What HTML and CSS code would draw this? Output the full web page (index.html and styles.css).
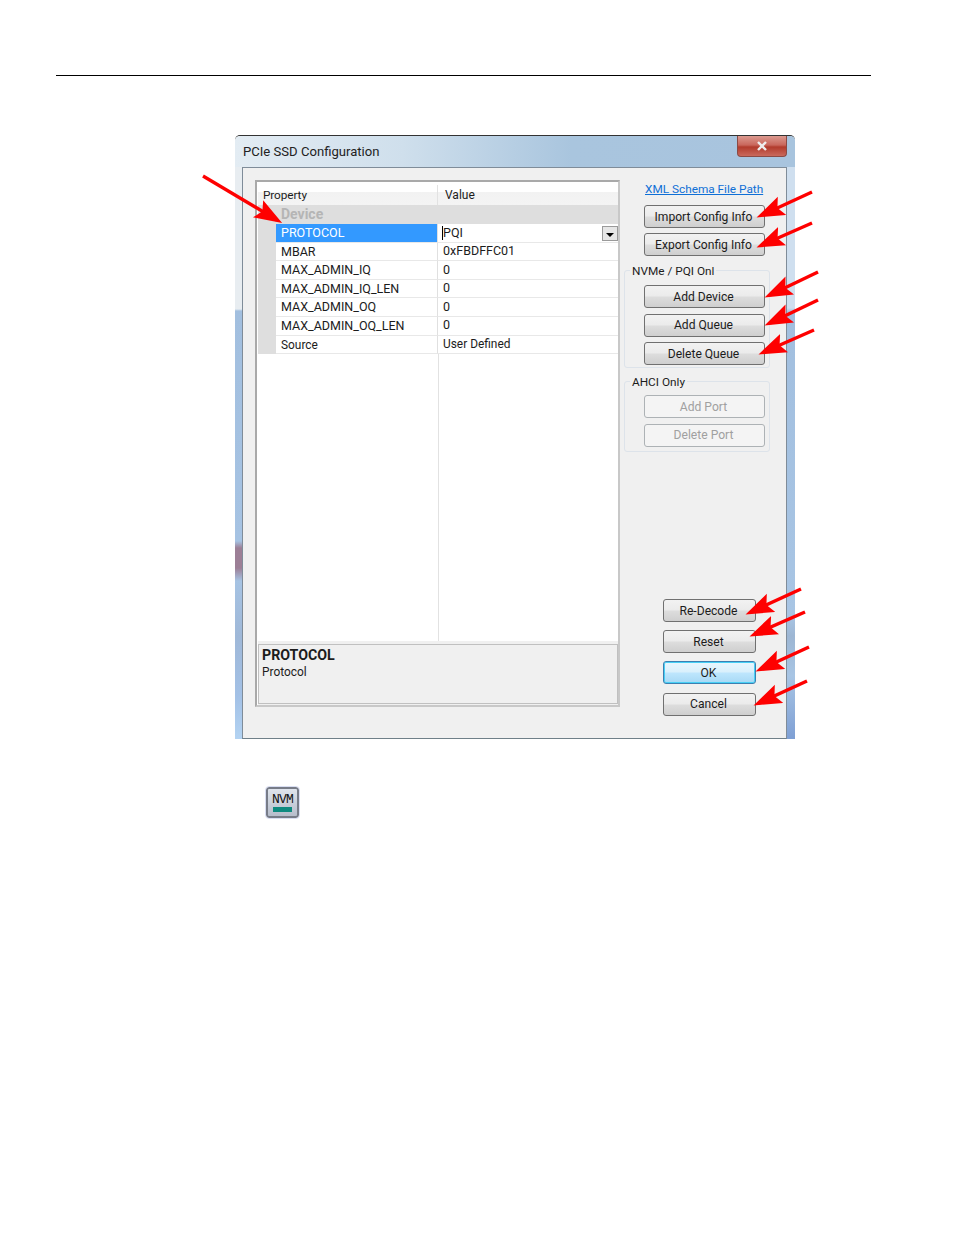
FILE: index.html
```html
<!DOCTYPE html>
<html lang="en">
<head>
    <meta charset="UTF-8">
    <meta name="viewport" content="width=device-width, initial-scale=1.0">
    <title>PCIe SSD Configuration</title>
    <link rel="stylesheet" href="styles.css">
</head>
<body>
    <div class="page">
        <hr class="top-rule">

        <div class="dialog">
            <div class="titlebar">
                <span class="title">PCIe SSD Configuration</span>
                <div class="close-btn">
                    <svg width="12" height="10" viewBox="0 0 12 10">
                        <path d="M2 1 L10 9 M10 1 L2 9" stroke="#eee" stroke-width="2.4" fill="none"/>
                    </svg>
                </div>
            </div>

            <div class="client">
                <div class="prop-panel">
                    <div class="prop-header">
                        <div class="col-name">Property</div>
                        <div class="col-value">Value</div>
                    </div>
                    <div class="prop-group">Device</div>
                    <div class="prop-row selected">
                        <div class="col-name">PROTOCOL</div>
                        <div class="col-value"><span class="caret">PQI</span>
                            <span class="combo-btn"></span>
                        </div>
                    </div>
                    <div class="prop-row">
                        <div class="col-name">MBAR</div>
                        <div class="col-value">0xFBDFFC01</div>
                    </div>
                    <div class="prop-row">
                        <div class="col-name">MAX_ADMIN_IQ</div>
                        <div class="col-value">0</div>
                    </div>
                    <div class="prop-row">
                        <div class="col-name">MAX_ADMIN_IQ_LEN</div>
                        <div class="col-value">0</div>
                    </div>
                    <div class="prop-row">
                        <div class="col-name">MAX_ADMIN_OQ</div>
                        <div class="col-value">0</div>
                    </div>
                    <div class="prop-row">
                        <div class="col-name">MAX_ADMIN_OQ_LEN</div>
                        <div class="col-value">0</div>
                    </div>
                    <div class="prop-row">
                        <div class="col-name mixed">Source</div>
                        <div class="col-value mixed">User Defined</div>
                    </div>
                    <div class="prop-empty"></div>
                    <div class="desc-wrap">
                        <div class="desc">
                            <div class="desc-title">PROTOCOL</div>
                            <div class="mixed">Protocol</div>
                        </div>
                    </div>
                </div>

                <div class="side">
                    <a class="schema-link">XML Schema File Path</a>
                    <div class="btn-stack top-btns">
                        <button class="btn">Import Config Info</button>
                        <button class="btn">Export Config Info</button>
                    </div>

                    <fieldset class="group nvme">
                        <legend>NVMe / PQI Onl</legend>
                        <button class="btn">Add Device</button>
                        <button class="btn">Add Queue</button>
                        <button class="btn">Delete Queue</button>
                    </fieldset>

                    <fieldset class="group ahci">
                        <legend>AHCI Only</legend>
                        <button class="btn" disabled>Add Port</button>
                        <button class="btn" disabled>Delete Port</button>
                    </fieldset>

                    <div class="bottom-btns">
                        <button class="btn">Re-Decode</button>
                        <button class="btn">Reset</button>
                        <button class="btn default">OK</button>
                        <button class="btn">Cancel</button>
                    </div>
                </div>
            </div>
        </div>

        <div class="nvm-icon">
            <span class="nvm-text">NVM</span>
            <span class="nvm-bar"></span>
        </div>
    </div>

    <!-- red callout arrows drawn over the screenshot -->
    <svg class="arrows" width="954" height="1235" viewBox="0 0 954 1235">
        <defs>
            <marker id="head" markerUnits="userSpaceOnUse" markerWidth="30" markerHeight="24" refX="22" refY="10" orient="auto">
                <path d="M0 0 L28 10 L0 20 L5 10 Z" fill="#fe0000"/>
            </marker>
        </defs>
        <g stroke="#fe0000" stroke-width="3.4" marker-end="url(#head)">
            <line x1="203" y1="176" x2="277" y2="220"/>
            <line x1="812" y1="192" x2="762" y2="215"/>
            <line x1="812" y1="223" x2="762" y2="245"/>
            <line x1="818" y1="272" x2="770" y2="295"/>
            <line x1="818" y1="300" x2="770" y2="323"/>
            <line x1="814" y1="330" x2="764" y2="352"/>
            <line x1="801" y1="589" x2="751" y2="612"/>
            <line x1="805" y1="612" x2="755" y2="634"/>
            <line x1="809" y1="647" x2="761" y2="669"/>
            <line x1="807" y1="681" x2="759" y2="703"/>
        </g>
    </svg>
</body>
</html>
```

FILE: styles.css
```css
body {
    margin: 0;
    background-color: #fff;
    font-family: Roboto, "Open Sans", sans-serif;
    font-size: 12.5px;
    color: #1c1c1c;
}

.page {
    position: relative;
    height: 1235px;
    overflow: hidden;
    padding-top: 75px;
    box-sizing: border-box;
}

.top-rule {
    width: 815px;
    height: 1px;
    margin: 0 0 0 56px;
    border: 0;
    background-color: #000;
}

.dialog {
    width: 560px;
    height: 604px;
    margin: 59px 0 0 235px;
    box-sizing: border-box;
    border-radius: 5px 5px 0 0;
    border-top: 1px solid #333;
    background:
        linear-gradient(to bottom, #e8edf1 0, #e8edf1 173px, #a2bfdf 175px, #a6c3e3 405px, #9c7f96 412px, #9c7f96 432px, #a6c3e3 445px, #9fb8d8 500px, #a3c1e6 560px, #b3d3f2 100%) no-repeat left top / 7px 100%,
        linear-gradient(to bottom, #cfdfef 0, #cfdfef 172px, #a2bfdf 176px, #a8c5e4 480px, #9db6d3 500px, #a8c5e4 540px, #7e9fd4 100%) no-repeat right top / 8px 100%;
    display: flex;
    flex-direction: column;
    padding: 0 8px 0 7px;
}

.titlebar {
    height: 31px;
    flex: none;
    margin: 0 -8px 0 -7px;
    padding: 0 8px 0 8px;
    border-radius: 5px 5px 0 0;
    background: linear-gradient(to right, #e3ecf3 0, #cfdfec 30%, #a9c5de 60%, #a8c4de 100%);
    display: flex;
    justify-content: space-between;
    align-items: flex-start;
}

.title {
    font-size: 13.1px;
    color: #222;
    margin-top: 8px;
}

.close-btn {
    width: 50px;
    height: 21px;
    box-sizing: border-box;
    border: 1px solid #8b4a44;
    border-top: 0;
    border-radius: 0 0 4px 4px;
    background: linear-gradient(to bottom, #dc9a90 0, #c9675c 45%, #b23b2c 55%, #c9695c 100%);
    display: flex;
    align-items: center;
    justify-content: center;
}

.client {
    flex: 1;
    display: flex;
    background-color: #f0f0f0;
    border: 1px solid #7f8c99;
    border-bottom: 1px solid #6f7f88;
    padding: 12px 0 0 12px;
    box-sizing: border-box;
    min-height: 0;
}

.prop-panel {
    width: 365px;
    height: 527px;
    box-sizing: border-box;
    border: 2px solid #b4b4b4;
    border-color: #a9a9a9 #c8c8c8 #c8c8c8 #a9a9a9;
    background-color: #fff;
    display: flex;
    flex-direction: column;
    padding: 3px 0 0 1px;
    flex: none;
}

.prop-header,
.prop-row {
    display: flex;
    flex: none;
}

.prop-header {
    height: 20px;
    line-height: 21px;
    background: linear-gradient(to bottom, #fff 0, #fff 35%, #f2f2f2 36%, #f4f4f4 100%);
}

.prop-header .col-name {
    width: 180px;
    box-sizing: border-box;
    padding-left: 5px;
    border-right: 1px solid #e2e2e2;
    font-size: 11.8px;
    letter-spacing: -0.1px;
}

.prop-header .col-value {
    padding-left: 7px;
    font-size: 12px;
}

.prop-group {
    height: 19px;
    flex: none;
    line-height: 19px;
    padding-left: 23px;
    background-color: #dedede;
    color: #b5b5b5;
    font-weight: bold;
    font-size: 14px;
}

.prop-row {
    height: 18.6px;
    line-height: 18.8px;
    border-left: 18px solid #dedede;
    box-sizing: border-box;
}

.prop-row .col-name {
    width: 162px;
    box-sizing: border-box;
    padding-left: 5px;
    border-bottom: 1px solid #e8e8e8;
    border-right: 1px solid #e0e0e0;
}

.prop-row .col-value {
    flex: 1;
    padding: 0 0 0 5px;
    box-sizing: border-box;
    border-bottom: 1px solid #e8e8e8;
    display: flex;
    justify-content: space-between;
    align-items: center;
}

.prop-row.selected .col-name {
    background-color: #3399ff;
    color: #fff;
}

.mixed,
.prop-row .col-name.mixed {
    font-size: 11.9px;
}

.caret {
    border-left: 1px solid #000;
    margin-left: -1px;
    line-height: 14px;
}

.combo-btn {
    width: 16px;
    height: 15px;
    margin-top: 1px;
    box-sizing: border-box;
    border: 1px solid #9a9a9a;
    background-color: #e6e6e6;
    position: relative;
}

.combo-btn::after {
    content: "";
    position: absolute;
    left: 3px;
    top: 6px;
    border: 4px solid transparent;
    border-top-color: #000;
    border-bottom: 0;
}

.prop-empty {
    flex: 1;
    background: linear-gradient(#e2e2e2, #e2e2e2) no-repeat 180px 0 / 1px 100%;
}

.desc-wrap {
    height: 64px;
    flex: none;
    background-color: #f0f0f0;
    padding-top: 3px;
    box-sizing: border-box;
    padding-bottom: 1px;
}

.desc {
    height: 100%;
    box-sizing: border-box;
    border: 1px solid #c0c0c0;
    padding: 2px 3px;
    line-height: 17px;
}

.desc-title {
    font-weight: bold;
    font-size: 14.2px;
}

.side {
    flex: 1;
    display: flex;
    flex-direction: column;
    position: relative;
    padding-left: 4px;
    font-size: 11.8px;
}

.schema-link {
    color: #0f6fd6;
    text-decoration: underline;
    align-self: flex-start;
    margin: 1px 0 0 21px;
    line-height: 17px;
}

.btn {
    display: block;
    width: 121px;
    height: 23px;
    padding: 0 2px 0 0;
    box-sizing: border-box;
    border: 1px solid #707070;
    border-radius: 3px;
    background: linear-gradient(to bottom, #f2f2f2 0, #ebebeb 48%, #dddddd 52%, #cfcfcf 100%);
    font-family: inherit;
    font-size: 12.1px;
    color: #1c1c1c;
}

.btn:disabled {
    border-color: #adb2b5;
    background: #f4f4f4;
    color: #a0a0a0;
}

.btn.default {
    border-color: #3c7fb1;
    box-shadow: inset 0 0 0 1px #48d0f5;
    background: linear-gradient(to bottom, #eaf6fd 0, #d9f0fc 48%, #bee6fd 52%, #a7d9f5 100%);
}

.top-btns {
    display: flex;
    flex-direction: column;
    gap: 5px;
    margin: 7px 0 0 20px;
}

.group {
    width: 146px;
    box-sizing: border-box;
    margin: 0;
    padding: 0 0 0 19px;
    border: 1px solid #dde3ea;
    border-radius: 3px;
}

.group legend {
    padding: 1px 2px 0;
    margin-left: -14px;
    line-height: 16px;
}

.group .btn + .btn {
    margin-top: 5.5px;
}

.nvme {
    margin-top: 6px;
    height: 106px;
    padding-top: 6px;
}

.ahci {
    margin-top: 5px;
    height: 79px;
    padding-top: 5px;
}

.bottom-btns {
    margin: 147px 0 0 39px;
    display: flex;
    flex-direction: column;
    gap: 8.2px;
}

.bottom-btns .btn {
    width: 93px;
}

.nvm-icon {
    width: 33px;
    height: 31px;
    margin: 48px 0 0 266px;
    box-sizing: border-box;
    border: 2px solid #777c88;
    border-radius: 3px;
    background: linear-gradient(to bottom, #dfe4ec, #b6bdcb);
    outline: 1px solid #d9def2;
    display: flex;
    flex-direction: column;
    align-items: center;
    padding-top: 5px;
}

.nvm-text {
    font-family: "Liberation Mono", monospace;
    font-size: 13px;
    line-height: 12px;
    letter-spacing: -0.8px;
    color: #111;
}

.nvm-bar {
    width: 19px;
    height: 5px;
    margin-top: 1px;
    background-color: #0e8a80;
}

.arrows {
    position: absolute;
    left: 0;
    top: 0;
    pointer-events: none;
}
```
